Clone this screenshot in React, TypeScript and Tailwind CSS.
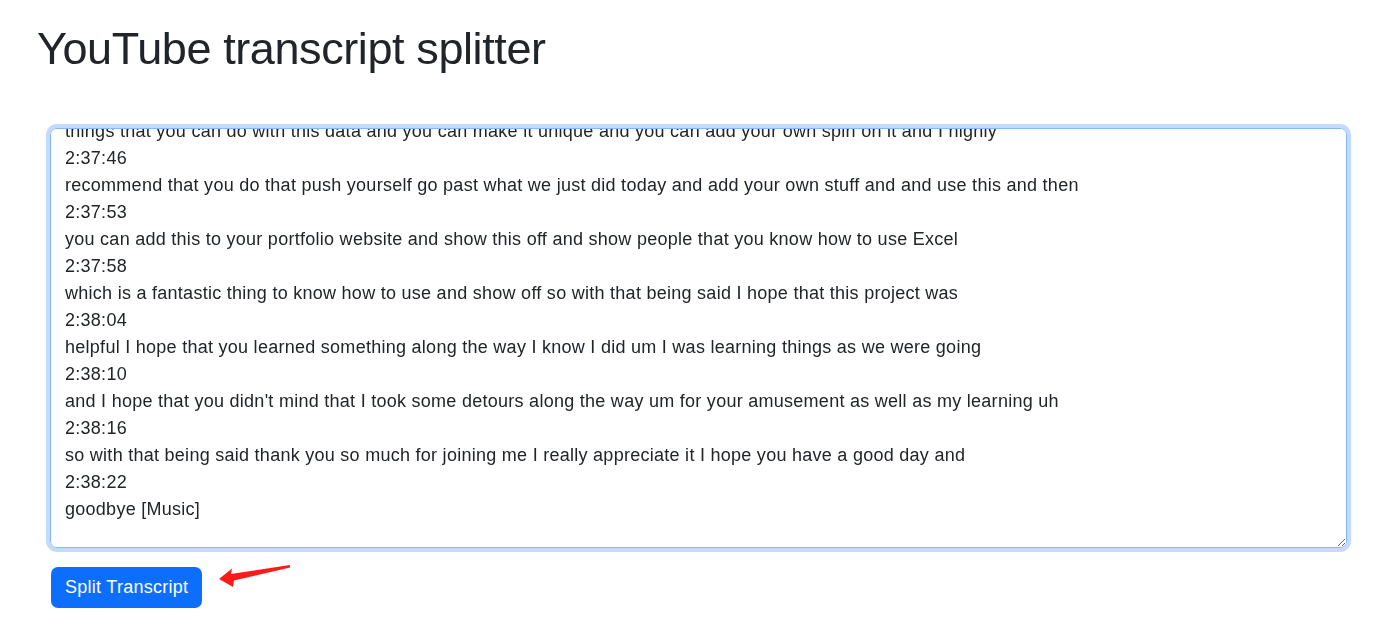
import { useEffect, useRef } from "react";

const transcript = `2:37:35
and with that we are done with this project there are a lot of other
2:37:40
things that you can do with this data and you can make it unique and you can add your own spin on it and I highly
2:37:46
recommend that you do that push yourself go past what we just did today and add your own stuff and and use this and then
2:37:53
you can add this to your portfolio website and show this off and show people that you know how to use Excel
2:37:58
which is a fantastic thing to know how to use and show off so with that being said I hope that this project was
2:38:04
helpful I hope that you learned something along the way I know I did um I was learning things as we were going
2:38:10
and I hope that you didn't mind that I took some detours along the way um for your amusement as well as my learning uh
2:38:16
so with that being said thank you so much for joining me I really appreciate it I hope you have a good day and
2:38:22
goodbye [Music]
`;

function App() {
  const areaRef = useRef<HTMLTextAreaElement>(null);

  useEffect(() => {
    const el = areaRef.current;
    if (!el) return;
    el.focus();
    el.setSelectionRange(el.value.length, el.value.length);
    // sit a few px above the very bottom, like the screenshot
    el.scrollTop = el.scrollHeight - el.clientHeight - 3;
  }, []);

  return (
    <div className="min-h-screen bg-white pl-[37px] pr-[33px] pt-[22px] font-['Liberation_Sans',Arial,sans-serif] text-[#212529]">
      <h1 className="text-[45px] leading-[54px] tracking-[-0.4px]">
        YouTube transcript splitter
      </h1>
      <div className="mt-[52px] pl-[13px]">
        <textarea
          ref={areaRef}
          defaultValue={transcript}
          spellCheck={false}
          className="block h-[420px] w-full rounded-[7px] border border-[#86b7fe] bg-white px-[14px] pt-[7px] pb-0 text-[18px] leading-[27px] tracking-[0.27px] text-[#212529] shadow-[0_0_0_4px_rgba(13,110,253,0.25)] outline-none"
        />
        <div className="mt-[19px] flex items-start">
          <button className="ml-px h-[41px] rounded-[7px] bg-[#0d6efd] px-[14px] text-[18px] leading-[27px] tracking-[0.27px] text-white">
            Split Transcript
          </button>
          <svg
            width="76"
            height="28"
            viewBox="0 0 76 28"
            className="ml-[14px] mt-[-5px]"
          >
            <polygon
              points="3,17 16,6.5 15,12 74,3 74,5.6 18,18.6 17,25"
              fill="#ff1a1a"
            />
          </svg>
        </div>
      </div>
    </div>
  );
}

export default App;
